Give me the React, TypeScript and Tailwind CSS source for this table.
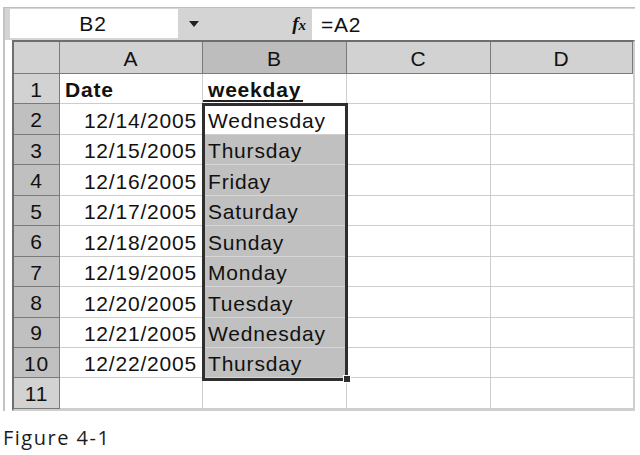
import React from 'react'

// Excel-style figure: name box + formula bar, then a 4-column sheet with B2:B10 selected

const COLS = ['A', 'B', 'C', 'D']
const ROWS: { n: number; a: string; b: string; head?: boolean }[] = [
  { n: 1, a: 'Date', b: 'weekday', head: true },
  { n: 2, a: '12/14/2005', b: 'Wednesday' },
  { n: 3, a: '12/15/2005', b: 'Thursday' },
  { n: 4, a: '12/16/2005', b: 'Friday' },
  { n: 5, a: '12/17/2005', b: 'Saturday' },
  { n: 6, a: '12/18/2005', b: 'Sunday' },
  { n: 7, a: '12/19/2005', b: 'Monday' },
  { n: 8, a: '12/20/2005', b: 'Tuesday' },
  { n: 9, a: '12/21/2005', b: 'Wednesday' },
  { n: 10, a: '12/22/2005', b: 'Thursday' },
  { n: 11, a: '', b: '' },
]

const inSel = (n: number) => n >= 2 && n <= 10

export default function App() {
  return (
    <div className="w-[640px] h-[455px] bg-white overflow-hidden text-[#111]" style={{ fontFamily: '"Liberation Sans", Arial, sans-serif' }}>
      <div className="ml-[3px] mt-[7px] w-[632px] border-l-2 border-[#c4c4c4]">
        {/* ── toolbar: name box + formula bar ── */}
        <div className="h-[33px] flex border-t border-[#bdbdbd] bg-[#d4d4d4]">
          <div className="ml-[5px] mt-[1px] w-[168px] h-[29px] bg-white flex items-center justify-center text-[21px] tracking-[0.8px] pr-[2px]">B2</div>
          <div className="w-[134px] flex items-center">
            <svg width="10" height="6" viewBox="0 0 10 6" className="ml-[11px]"><path d="M0 0H10L5 6Z" fill="#222" /></svg>
            <span className="ml-auto mr-[6px] text-[19px] italic font-bold" style={{ fontFamily: '"Liberation Serif", serif' }}>
              f<span className="text-[15px]">x</span>
            </span>
          </div>
          <div className="flex-1 mt-[1px] bg-white flex items-center pl-[9px] text-[21px] tracking-[0.8px]">=A2</div>
        </div>

        {/* ── sheet ── */}
        <div className="relative ml-[7px] w-[623px] border-t-2 border-l-2 border-[#6e6e6e] border-r-2 border-r-[#cfcfcf] border-b-2 border-b-[#cfcfcf]">
          <div className="grid grid-cols-[46px_143px_144px_144px_142px] grid-rows-[32px_repeat(11,30.45px)] text-[21px] tracking-[0.8px]">
            {/* header row */}
            <div className="bg-[#d2d2d2] border-r border-b border-[#7a7a7a]" />
            {COLS.map((c) => (
              <div
                key={c}
                className={`flex items-center justify-center pt-[2px] border-r border-b border-[#7a7a7a] ${c === 'B' ? 'bg-[#bdbdbd]' : 'bg-[#d2d2d2]'}`}
              >
                {c}
              </div>
            ))}

            {ROWS.map((r) => (
              <React.Fragment key={r.n}>
                <div className={`flex items-center justify-center pt-[2px] border-r border-b border-[#7a7a7a] ${inSel(r.n) ? 'bg-[#c0c0c0]' : 'bg-[#d2d2d2]'}`}>
                  {r.n}
                </div>
                <div className={`flex items-center pt-[3px] border-r border-b border-[#cdcdcd] px-[5px] ${r.head ? 'font-bold' : 'justify-end'}`}>{r.a}</div>
                <div
                  className={`flex items-center pt-[3px] border-r border-b px-[5px] ${inSel(r.n) && r.n > 2 ? 'bg-[#c0c0c0] border-[#d6d6d6]' : 'border-[#cdcdcd]'}`}
                >
                  {r.head ? (
                    <span className="font-bold -ml-[5px] pl-[5px] pr-[2px] border-b-2 border-[#222] leading-[21px]">{r.b}</span>
                  ) : (
                    r.b
                  )}
                </div>
                <div className="border-r border-b border-[#cdcdcd]" />
                <div className="border-b border-[#cdcdcd]" />
              </React.Fragment>
            ))}
          </div>

          {/* selection outline B2:B10 + fill handle */}
          <div className="absolute left-[188px] top-[61px] w-[146px] h-[278px] border-[3px] border-[#2e2e2e] pointer-events-none" />
          <div className="absolute left-[329px] top-[333px] w-[8px] h-[8px] bg-[#2e2e2e] border border-white" />
        </div>
      </div>

      <p className="mt-[12px] ml-[3px] text-[20px] tracking-[1.5px] text-[#1c1c1c]" style={{ fontFamily: '"Open Sans", sans-serif' }}>
        Figure 4-1
      </p>
    </div>
  )
}
